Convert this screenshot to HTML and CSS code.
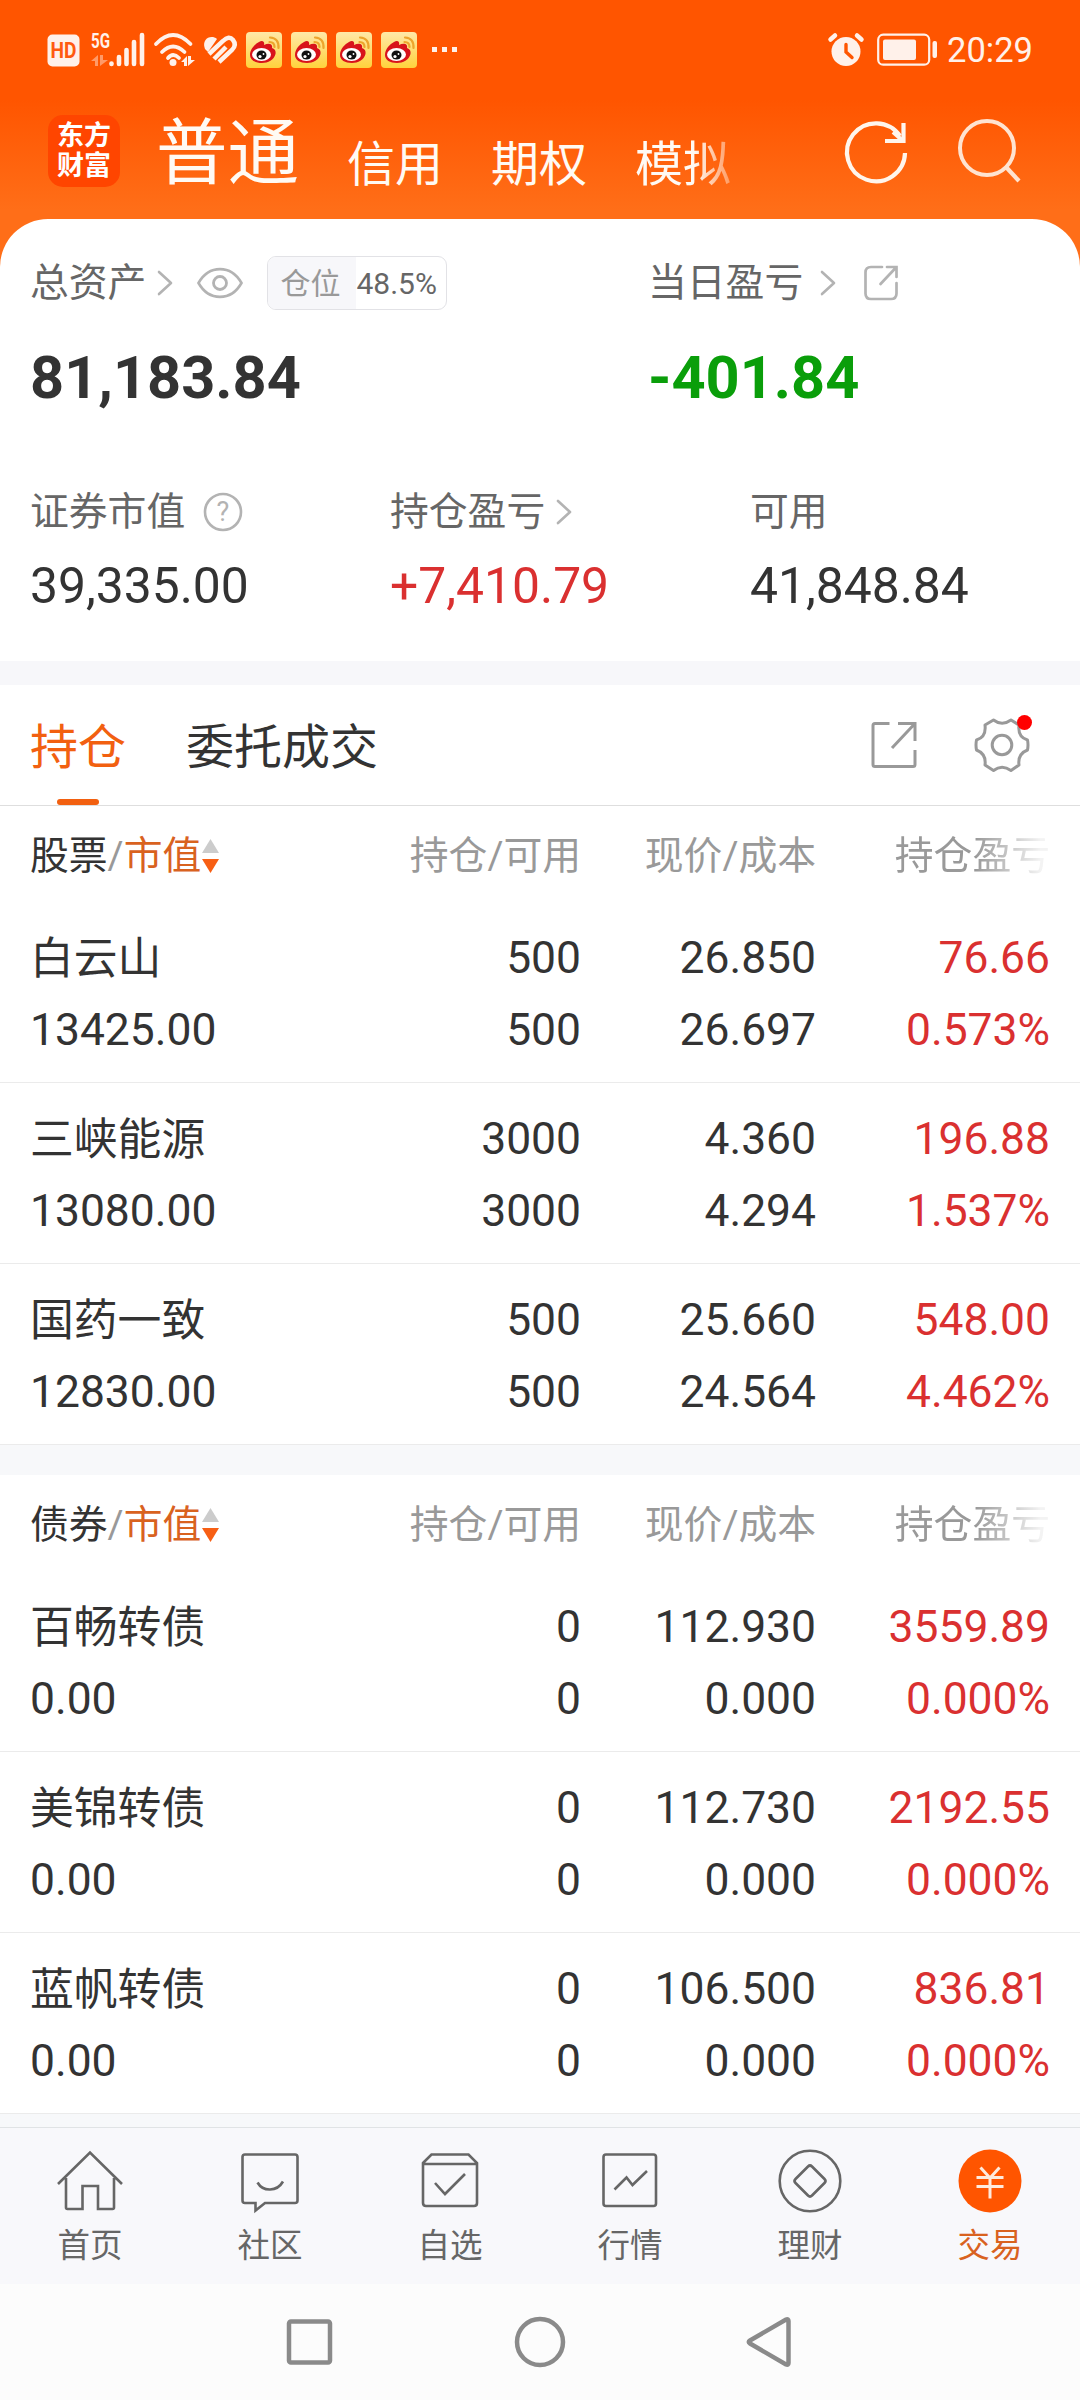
FILE: index.html
```html
<!DOCTYPE html>
<html lang="zh-CN">
<head>
<meta charset="utf-8">
<title>交易</title>
<link rel="stylesheet" href="styles.css">
</head>
<body>
<svg class="defs" width="0" height="0">
  <defs>
    <linearGradient id="gold" x1="0" y1="0" x2="0" y2="1"><stop offset="0" stop-color="#ffe9a8"/><stop offset="1" stop-color="#ffd23c"/></linearGradient>
    <symbol id="weibo" viewBox="0 0 36 36">
      <rect width="36" height="36" rx="4" fill="url(#gold)"/>
      <path d="M4 23C4 17 9 12 13 10C16 8 19 9 18 13C22 11 27 11 26 16C29 17 30 19 29.500 22C28 28 22 31 16 31C9 31 4 28 4 23Z" fill="#d8131b"/>
      <ellipse cx="15.500" cy="22.500" rx="9.500" ry="6.500" fill="#fff"/>
      <ellipse cx="15.500" cy="23" rx="5" ry="4.600" fill="#111"/>
      <circle cx="14" cy="24.500" r="1.600" fill="#fff"/><circle cx="17.500" cy="22" r=".9" fill="#fff"/>
      <path d="M24 5.500Q33 6 32.500 16M23.500 10Q28.500 10 28.500 15" fill="none" stroke="#eda52c" stroke-width="2.200" stroke-linecap="round"/>
    </symbol>
    <symbol id="chevron" viewBox="0 0 16 26"><path d="M2 2L14 13L2 24" fill="none" stroke="#b3b3b3" stroke-width="2.600" stroke-linecap="round" stroke-linejoin="round"/></symbol>
    <symbol id="sort" viewBox="0 0 17 36"><path d="M8.500 1L17 15H0Z" fill="#ccc"/><path d="M8.500 35L17 21H0Z" fill="#f75f14"/></symbol>
  </defs>
</svg>

<header class="top">
  <div class="status">
    <svg class="hd" width="33" height="36" viewBox="0 0 33 36"><rect x=".5" y="2.500" width="32" height="32" rx="5" fill="#fff1ea"/><text x="3.500" y="26" textLength="26" lengthAdjust="spacingAndGlyphs" class="hd-text">HD</text></svg>
    <svg class="signal" width="54" height="36" viewBox="0 0 54 36"><text x="0" y="15.500" textLength="19" lengthAdjust="spacingAndGlyphs" class="net-text">5G</text>
      <path d="M0 29L7 23V34H4V29ZM9 23H12V28H17L9 34Z" fill="#ff9a68"/>
      <path d="M20.500 31.500V32M28 25V32M35.500 18V32M43 10V32M51 3V32" stroke="#fff1ea" stroke-width="4.600" stroke-linecap="round"/></svg>
    <svg class="wifi" width="42" height="36" viewBox="0 0 42 36"><path d="M2 12Q19 -6 36.500 12M8 20Q19 9 30.500 20M14 26Q19 20 25 26" fill="none" stroke="#fff1ea" stroke-width="3.800" stroke-linecap="round"/><circle cx="19" cy="30.500" r="3.500" fill="#fff1ea"/><path d="M27 30L33 24V34H30V30ZM34 24H37V28H41L34 34Z" fill="#fff1ea"/></svg>
    <svg class="heart" width="34" height="36" viewBox="0 0 34 36"><path d="M2 17C-2 7 8 2 14 7L5 20Z" fill="#fff1ea"/><path d="M6 22L20 9Q26 3 30 8Q34 13 29 18L16 30M11 27L23 15" fill="none" stroke="#fff1ea" stroke-width="4.500"/></svg>
    <svg class="weibo" width="36" height="36"><use href="#weibo"/></svg>
    <svg class="weibo" width="36" height="36"><use href="#weibo"/></svg>
    <svg class="weibo" width="36" height="36"><use href="#weibo"/></svg>
    <svg class="weibo" width="36" height="36"><use href="#weibo"/></svg>
    <svg class="more" width="26" height="36" viewBox="0 0 26 36"><path d="M0 15h5v5h-5zM10 15h5v5h-5zM20 15h5v5h-5z" fill="#fff1ea"/></svg>
    <svg class="alarm" width="36" height="36" viewBox="0 0 36 36"><circle cx="18" cy="19.500" r="14.500" fill="#fff1ea"/><path d="M2.500 7.500L7 3.500M33.500 7.500L29 3.500" stroke="#fff1ea" stroke-width="4.500" stroke-linecap="round"/><path d="M18 12.500V20L24 25.500" fill="none" stroke="#ff5500" stroke-width="3.400" stroke-linecap="round"/></svg>
    <svg class="battery" width="61" height="36" viewBox="0 0 61 36"><rect x="1.200" y="2.700" width="51" height="30" rx="5" fill="none" stroke="#fff1ea" stroke-width="2.200"/><rect x="6" y="7.500" width="33" height="20.500" rx="2" fill="#fff1ea"/><rect x="55.500" y="9" width="4.500" height="17" rx="2" fill="#fff1ea"/></svg>
    <span class="clock">20:29</span>
  </div>
  <nav class="modes">
    <div class="logo"><span>东方</span><span>财富</span></div>
    <span class="mode mode-on">普通</span>
    <span class="mode">信用</span>
    <span class="mode">期权</span>
    <span class="mode mode-fade">模拟</span>
    <svg class="refresh" width="64" height="66" viewBox="0 0 64 66"><path d="M60 34A29 29 0 1 1 55 17" fill="none" stroke="#fff5ec" stroke-width="4.200"/><path d="M58.500 4V22H40" fill="none" stroke="#fff5ec" stroke-width="4.200"/><path d="M48 13L58 22" stroke="#fff5ec" stroke-width="4"/></svg>
    <svg class="search" width="64" height="66" viewBox="0 0 64 66"><circle cx="29" cy="29" r="27" fill="none" stroke="#ffe3d0" stroke-width="4"/><path d="M48 48L61 62" stroke="#ffe3d0" stroke-width="4.200"/></svg>
  </nav>
</header>

<main>
  <section class="summary">
    <div class="totals">
      <div class="total">
        <div class="label"><span>总资产</span><svg class="chev" width="16" height="26"><use href="#chevron"/></svg>
          <svg class="eye" width="46" height="32" viewBox="0 0 46 32"><path d="M1.500 16C12 -2.500 34 -2.500 44.500 16C34 34.500 12 34.500 1.500 16Z" fill="none" stroke="#b3b3b3" stroke-width="2.600"/><circle cx="23" cy="16" r="6.500" fill="none" stroke="#b3b3b3" stroke-width="2.800"/></svg>
          <div class="badge"><span class="badge-key">仓位</span><span class="badge-val">48.5%</span></div></div>
        <div class="big">81,183.84</div>
      </div>
      <div class="total">
        <div class="label"><span>当日盈亏</span><svg class="chev chev-wide" width="16" height="26"><use href="#chevron"/></svg>
          <svg class="share" width="34" height="36" viewBox="0 0 34 36"><path d="M18 2H7Q1.500 2 1.500 7.500V28.500Q1.500 34 7 34H27Q32.500 34 32.500 28.500V18M23 2H32.500V12M32 2.500L16.500 19" fill="none" stroke="#b3b3b3" stroke-width="2.700" stroke-linecap="round"/></svg></div>
        <div class="big green">-401.84</div>
      </div>
    </div>
    <div class="stats">
      <div><div class="label"><span>证券市值</span><svg class="help" width="40" height="40" viewBox="0 0 40 40"><circle cx="20" cy="20" r="18" fill="none" stroke="#b3b3b3" stroke-width="2.600"/><text x="20" y="29" text-anchor="middle" class="help-text">?</text></svg></div><div class="mid">39,335.00</div></div>
      <div><div class="label"><span>持仓盈亏</span><svg class="chev" width="16" height="26"><use href="#chevron"/></svg></div><div class="mid red">+7,410.79</div></div>
      <div><div class="label"><span>可用</span></div><div class="mid">41,848.84</div></div>
    </div>
  </section>

  <div class="tabs">
    <span class="tab tab-on">持仓</span>
    <span class="tab">委托成交</span>
    <svg class="export" width="46" height="48" viewBox="0 0 46 48"><path d="M18.500 2.500H4Q2 2.500 2 4.500V43.500Q2 45.500 4 45.500H42Q44 45.500 44 43.500V29M27 2.500H44V20M43 3.500L21 27" fill="none" stroke="#999" stroke-width="3"/></svg>
    <svg class="gear" width="60" height="62" viewBox="0 0 60 62"><path d="M19.500 7Q28 13.500 37 7L45 12Q43.500 24 53.500 27Q54.500 32 53.500 37Q43.500 41 45 52L37 57.500Q28 51 19.500 57.500L11 52Q12.500 41 2.500 37Q1.500 32 2.500 27Q12.500 24 11 12Z" fill="none" stroke="#999" stroke-width="3" stroke-linejoin="round"/><circle cx="28" cy="32" r="9.800" fill="none" stroke="#999" stroke-width="3"/><circle cx="50.500" cy="9.500" r="7.500" fill="#f00"/></svg>
  </div>

  <section class="table">
    <div class="grid head"><div class="key">股票<i>/</i><b>市值</b><svg class="sort" width="17" height="36"><use href="#sort"/></svg></div><div>持仓/可用</div><div>现价/成本</div><div class="fade">持仓盈亏</div></div>
    <div class="grid row"><div class="name"><p>白云山</p><p>13425.00</p></div><div><p>500</p><p>500</p></div><div><p>26.850</p><p>26.697</p></div><div class="red"><p>76.66</p><p>0.573%</p></div></div>
    <div class="grid row"><div class="name"><p>三峡能源</p><p>13080.00</p></div><div><p>3000</p><p>3000</p></div><div><p>4.360</p><p>4.294</p></div><div class="red"><p>196.88</p><p>1.537%</p></div></div>
    <div class="grid row"><div class="name"><p>国药一致</p><p>12830.00</p></div><div><p>500</p><p>500</p></div><div><p>25.660</p><p>24.564</p></div><div class="red"><p>548.00</p><p>4.462%</p></div></div>
  </section>

  <section class="table bonds">
    <div class="grid head"><div class="key">债券<i>/</i><b>市值</b><svg class="sort" width="17" height="36"><use href="#sort"/></svg></div><div>持仓/可用</div><div>现价/成本</div><div class="fade">持仓盈亏</div></div>
    <div class="grid row"><div class="name"><p>百畅转债</p><p>0.00</p></div><div><p>0</p><p>0</p></div><div><p>112.930</p><p>0.000</p></div><div class="red"><p>3559.89</p><p>0.000%</p></div></div>
    <div class="grid row"><div class="name"><p>美锦转债</p><p>0.00</p></div><div><p>0</p><p>0</p></div><div><p>112.730</p><p>0.000</p></div><div class="red"><p>2192.55</p><p>0.000%</p></div></div>
    <div class="grid row"><div class="name"><p>蓝帆转债</p><p>0.00</p></div><div><p>0</p><p>0</p></div><div><p>106.500</p><p>0.000</p></div><div class="red"><p>836.81</p><p>0.000%</p></div></div>
  </section>
</main>

<nav class="bottom">
  <div class="item"><svg width="68" height="68" viewBox="0 0 68 68"><path d="M2 37L34 5.500L66 37M10 31V60.500Q10 62 11.500 62H26.500V39H42V62H56.500Q58 62 58 60.500V31"/></svg><span>首页</span></div>
  <div class="item"><svg width="68" height="68" viewBox="0 0 68 68"><path d="M9 7.500H59Q61.500 7.500 61.500 10V53.500Q61.500 56 59 56H29L19.500 63.500V56H9Q6.500 56 6.500 53.500V10Q6.500 7.500 9 7.500ZM21.500 35.500C27 45 41 45 47 34.500"/></svg><span>社区</span></div>
  <div class="item"><svg width="68" height="68" viewBox="0 0 68 68"><path d="M7 16L15.500 7.500H52.500L61 16V56Q61 59 58 59H10Q7 59 7 56ZM7 17H61M19 36L29 47L49 27"/></svg><span>自选</span></div>
  <div class="item"><svg width="68" height="68" viewBox="0 0 68 68"><path d="M10 7.500H57.500Q60 7.500 60 10V56.500Q60 59 57.500 59H10Q7.500 59 7.500 56.500V10Q7.500 7.500 10 7.500ZM18.500 42.500L30.500 30.500L36.500 38L51 24"/></svg><span>行情</span></div>
  <div class="item"><svg width="68" height="68" viewBox="0 0 68 68"><circle cx="34" cy="34" r="30.300"/><path d="M32 19.500Q34 17.500 36 19.500L48.500 32Q50.500 34 48.500 36L36 48.500Q34 50.500 32 48.500L19.500 36Q17.500 34 19.500 32Z"/></svg><span>理财</span></div>
  <div class="item item-on"><svg width="68" height="68" viewBox="0 0 68 68"><circle cx="34" cy="34" r="31.500" class="disc"/><path class="yen" d="M24.500 20.500L34 31L43.500 20.500M20.500 30.500H47.500M20.500 39.500H47.500M34 30V51.500"/></svg><span>交易</span></div>
</nav>

<div class="system">
  <svg width="50" height="52" viewBox="0 0 50 52"><rect x="4" y="5.500" width="41" height="41" rx="2"/></svg>
  <svg width="50" height="52" viewBox="0 0 50 52"><circle cx="25" cy="26" r="23"/></svg>
  <svg width="50" height="52" viewBox="0 0 50 52"><path d="M5 24.500L41 3.500Q43.500 2.500 43.500 5V47Q43.500 49.500 41 48.500L5 27.500Q2.500 26 5 24.500Z"/></svg>
</div>
</body>
</html>
```
FILE: styles.css
```css
* { box-sizing: border-box; }
body { margin: 0; width: 1080px; height: 2400px; display: flex; flex-direction: column; overflow: hidden; background: #fff; color: #333; font-family: Roboto, "Noto Sans CJK SC", sans-serif; }
p { margin: 0; }
svg { display: block; flex: none; overflow: visible; }
.defs { position: absolute; }

.top { height: 269px; flex: none; background: linear-gradient(#ff5500 0, #ff5500 100px, #ff6e18 210px, #ff6e18 100%); }
.status { height: 100px; padding: 32px 0 0 47px; display: flex; align-items: flex-start; }
.hd-text { font: 700 22px Roboto; fill: #ff5a10; }
.net-text { font: 700 20px Roboto; fill: #fff1ea; }
.signal { margin-left: 11px; }
.wifi { margin-left: 9px; }
.heart { margin-left: 7px; }
.weibo { margin-left: 9px; }
.more { margin-left: 15px; }
.alarm { margin-left: auto; }
.battery { margin-left: 13px; }
.clock { width: 97px; margin-left: 9px; margin-right: 36px; font-size: 34.500px; line-height: 37px; color: #fff1ea; }

.modes { height: 119px; padding-left: 48px; display: flex; align-items: flex-start; color: #fffaf4; }
.logo { width: 72px; height: 72px; margin-top: 15px; border-radius: 15px; background: #ff4500; display: flex; flex-direction: column; align-items: center; justify-content: center; font-size: 27px; line-height: 30px; font-weight: 700; color: #fff; }
.mode { font-size: 48px; line-height: 60px; margin: 35px 0 0 48px; }
.mode-on { font-size: 71.500px; line-height: 84px; margin: 12px 0 0 36px; }
.mode-fade { -webkit-mask-image: linear-gradient(90deg, #000 62%, rgba(0,0,0,.35) 100%); mask-image: linear-gradient(90deg, #000 62%, rgba(0,0,0,.35) 100%); }
.refresh { margin: 19px 0 0 114px; }
.search { margin: 19px 0 0 49px; }

.summary { height: 442px; margin-top: -50px; padding: 34px 30px 0; border-radius: 48px 48px 0 0; background: #fff; }
.totals { display: grid; grid-template-columns: 618px 1fr; height: 229px; }
.label { display: flex; align-items: center; height: 60px; font-size: 38.800px; line-height: 60px; color: #666; }
.chev { margin-left: 11px; }
.chev-wide { margin-left: 17px; }
.eye { margin-left: 24px; }
.share { margin-left: 28px; }
.help { margin-left: 18px; }
.help-text { font: 27px Roboto; fill: #b3b3b3; }
.badge { display: flex; width: 180px; height: 54px; margin-left: 24px; border: 1px solid #e2e2e6; border-radius: 9px; overflow: hidden; font-size: 30px; line-height: 53px; }
.badge-key { width: 88px; padding-left: 12px; background: #f7f7fa; color: #999; }
.big { margin-top: 30px; font-size: 59.500px; line-height: 70px; font-weight: 700; }
.green { color: #0a9e0a; }
.red { color: #da3030; }
.stats { display: grid; grid-template-columns: 360px 360px 1fr; }
.mid { margin-top: 14px; font-size: 49.800px; line-height: 60px; }

.tabs { height: 145px; flex: none; border-top: 24px solid #f7f7fa; border-bottom: 1px solid #dedede; padding: 0 46px 0 30px; display: flex; align-items: center; font-size: 48px; }
.tab { line-height: 126px; height: 120px; margin-right: 60px; }
.tab-on { display: flex; flex-direction: column; align-items: center; color: #f26010; }
.tab-on::after { content: ""; width: 42px; height: 6px; margin-top: -12px; border-radius: 3px; background: #f26010; flex: none; }
.export { margin-left: auto; }
.gear { margin: -3px 0 0 57px; }

.grid { display: grid; grid-template-columns: 321px 230px 235px 234px; padding-left: 30px; text-align: right; }
.head { height: 96px; font-size: 38.800px; line-height: 99px; color: #999; }
.key { display: flex; text-align: left; color: #333; }
.key i { font-style: normal; color: #999; }
.key b { font-weight: 400; color: #d9621f; }
.sort { margin: 32px 0 0 1px; }
.fade { -webkit-mask-image: linear-gradient(90deg, #000 68%, rgba(0,0,0,.12) 96%); mask-image: linear-gradient(90deg, #000 68%, rgba(0,0,0,.12) 96%); }
.row { height: 181px; padding-top: 20px; border-bottom: 1px solid #ebebeb; font-size: 44.400px; line-height: 72px; }
.row p { height: 72px; }
.name { text-align: left; }
.name p:first-child { font-size: 43.800px; line-height: 74px; }
.table { background: #fff; }
.bonds { border-top: 30px solid #f7f8fa; }

.bottom { flex: none; height: 157px; margin-top: auto; z-index: 1; border-top: 1px solid #e0e3e5; background: #f8f8fb; display: grid; grid-template-columns: repeat(6, 1fr); box-shadow: 0 -13px #f7f8fa; }
.item { display: flex; flex-direction: column; align-items: center; padding-top: 19px; font-size: 32.500px; line-height: 48px; color: #666; }
.item svg { fill: none; stroke: #666; stroke-width: 2.600; }
.item span { margin-top: 7px; }
.item-on { color: #d9621f; }
.item .disc { fill: #ff5500; stroke: none; }
.item .yen { stroke: #ffeadc; stroke-width: 3; }
.system { flex: none; height: 116px; background: #fcfcfc; display: flex; justify-content: center; gap: 180px; padding-top: 32px; }
.system svg { fill: none; stroke: #8a8a8a; stroke-width: 4.500; }
```
